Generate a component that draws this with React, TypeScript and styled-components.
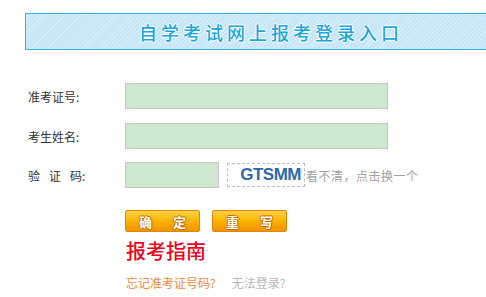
import styled, { createGlobalStyle } from "styled-components";

const GlobalStyle = createGlobalStyle`
  body {
    margin: 0;
    background: #fff;
    font-family: "Noto Sans CJK SC", "Liberation Sans", sans-serif;
  }
`;

function App() {
  return (
    <>
      <GlobalStyle />
      <Page>
        <Banner>
          <h1>自学考试网上报考登录入口</h1>
        </Banner>
        <Form>
          <Row>
            <Label>准考证号:</Label>
            <Field />
          </Row>
          <Row>
            <Label>考生姓名:</Label>
            <Field />
          </Row>
          <Row>
            <Label>
              <Spaced $gap={9}>验证</Spaced>码:
            </Label>
            <Field $short />
            <Captcha>GTSMM</Captcha>
            <Hint>看不清，点击换一个</Hint>
          </Row>
          <Actions>
            <Button>
              <Spaced $gap={21}>确</Spaced>定
            </Button>
            <Button>
              <Spaced $gap={21}>重</Spaced>写
            </Button>
          </Actions>
          <Guide>报考指南</Guide>
          <Links>
            <LinkText>忘记准考证号码?</LinkText>
            <LinkText $muted>无法登录?</LinkText>
          </Links>
        </Form>
      </Page>
    </>
  );
}

export default App;

const Page = styled.div`
  width: 486px;
  height: 297px;
  overflow: hidden;
  padding-top: 13px;
  box-sizing: border-box;
`;

const Banner = styled.div`
  margin-left: 25px;
  width: 480px;
  height: 37px;
  border: 1px solid #2fb4e4;
  border-right: none;
  background-color: #c6e6f8;
  background-image: repeating-linear-gradient(
    -45deg,
    #c6e6f8 0px,
    #c6e6f8 2px,
    #d6eefa 2px,
    #d6eefa 3px
  );
  display: flex;
  align-items: center;
  padding-left: 113px;
  box-sizing: border-box;
  h1 {
    margin: 0;
    font-size: 18px;
    font-weight: 500;
    letter-spacing: 4px;
    color: #1ba5dd;
    text-shadow: 1px 0 0 #fff, -1px 0 0 #fff, 0 1px 0 #fff, 0 -1px 0 #fff;
  }
`;

const Form = styled.div`
  display: flex;
  flex-direction: column;
  padding-top: 33px;
`;

const Row = styled.div`
  display: flex;
  align-items: center;
  height: 26px;
  margin-bottom: 13px;
  &:first-child {
    margin-bottom: 14px;
  }
`;

const Label = styled.span`
  width: 97px;
  padding-left: 28px;
  font-size: 12px;
  color: #333;
`;

const Spaced = styled.span<{ $gap: number }>`
  letter-spacing: ${(p) => p.$gap}px;
`;

const Field = styled.div<{ $short?: boolean }>`
  width: ${(p) => (p.$short ? "94px" : "263px")};
  height: 26px;
  box-sizing: border-box;
  background: #cee8d0;
  border: 1px solid #c6c6c6;
`;

const Captcha = styled.div`
  margin-left: 8px;
  width: 78px;
  height: 24px;
  box-sizing: border-box;
  border: 1px dashed #b5bfd3;
  background: #fff;
  display: flex;
  align-items: center;
  justify-content: flex-end;
  padding-right: 3px;
  font-family: "Liberation Sans", Arial, sans-serif;
  font-weight: bold;
  font-size: 17px;
  color: #2d68ad;
  letter-spacing: -0.5px;
`;

const Hint = styled.span`
  margin-left: 1px;
  font-size: 12px;
  letter-spacing: 0.5px;
  color: #a0a0a0;
`;

const Actions = styled.div`
  display: flex;
  gap: 12px;
  padding-left: 125px;
  margin-top: 9px;
`;

const Button = styled.div`
  width: 75px;
  height: 22px;
  box-sizing: border-box;
  border: 1px solid #e0830f;
  border-radius: 2px;
  background: linear-gradient(
    to bottom,
    #ffd048 0%,
    #ffbf10 35%,
    #f9a900 60%,
    #f29500 100%
  );
  display: flex;
  align-items: center;
  justify-content: center;
  font-size: 13px;
  font-weight: bold;
  color: #fff;
  text-shadow: 1px 0 0 #c56a00, -1px 0 0 #c56a00, 0 1px 0 #c56a00,
    0 -1px 0 #c56a00;
`;

const Guide = styled.div`
  padding-left: 126px;
  margin-top: 8px;
  font-size: 20px;
  line-height: 22px;
  font-weight: 500;
  color: #f5001a;
`;

const Links = styled.div`
  display: flex;
  gap: 16px;
  padding-left: 126px;
  margin-top: 12px;
`;

const LinkText = styled.span<{ $muted?: boolean }>`
  font-size: 12px;
  color: ${(p) => (p.$muted ? "#b9b9b9" : "#ec8a3d")};
`;
